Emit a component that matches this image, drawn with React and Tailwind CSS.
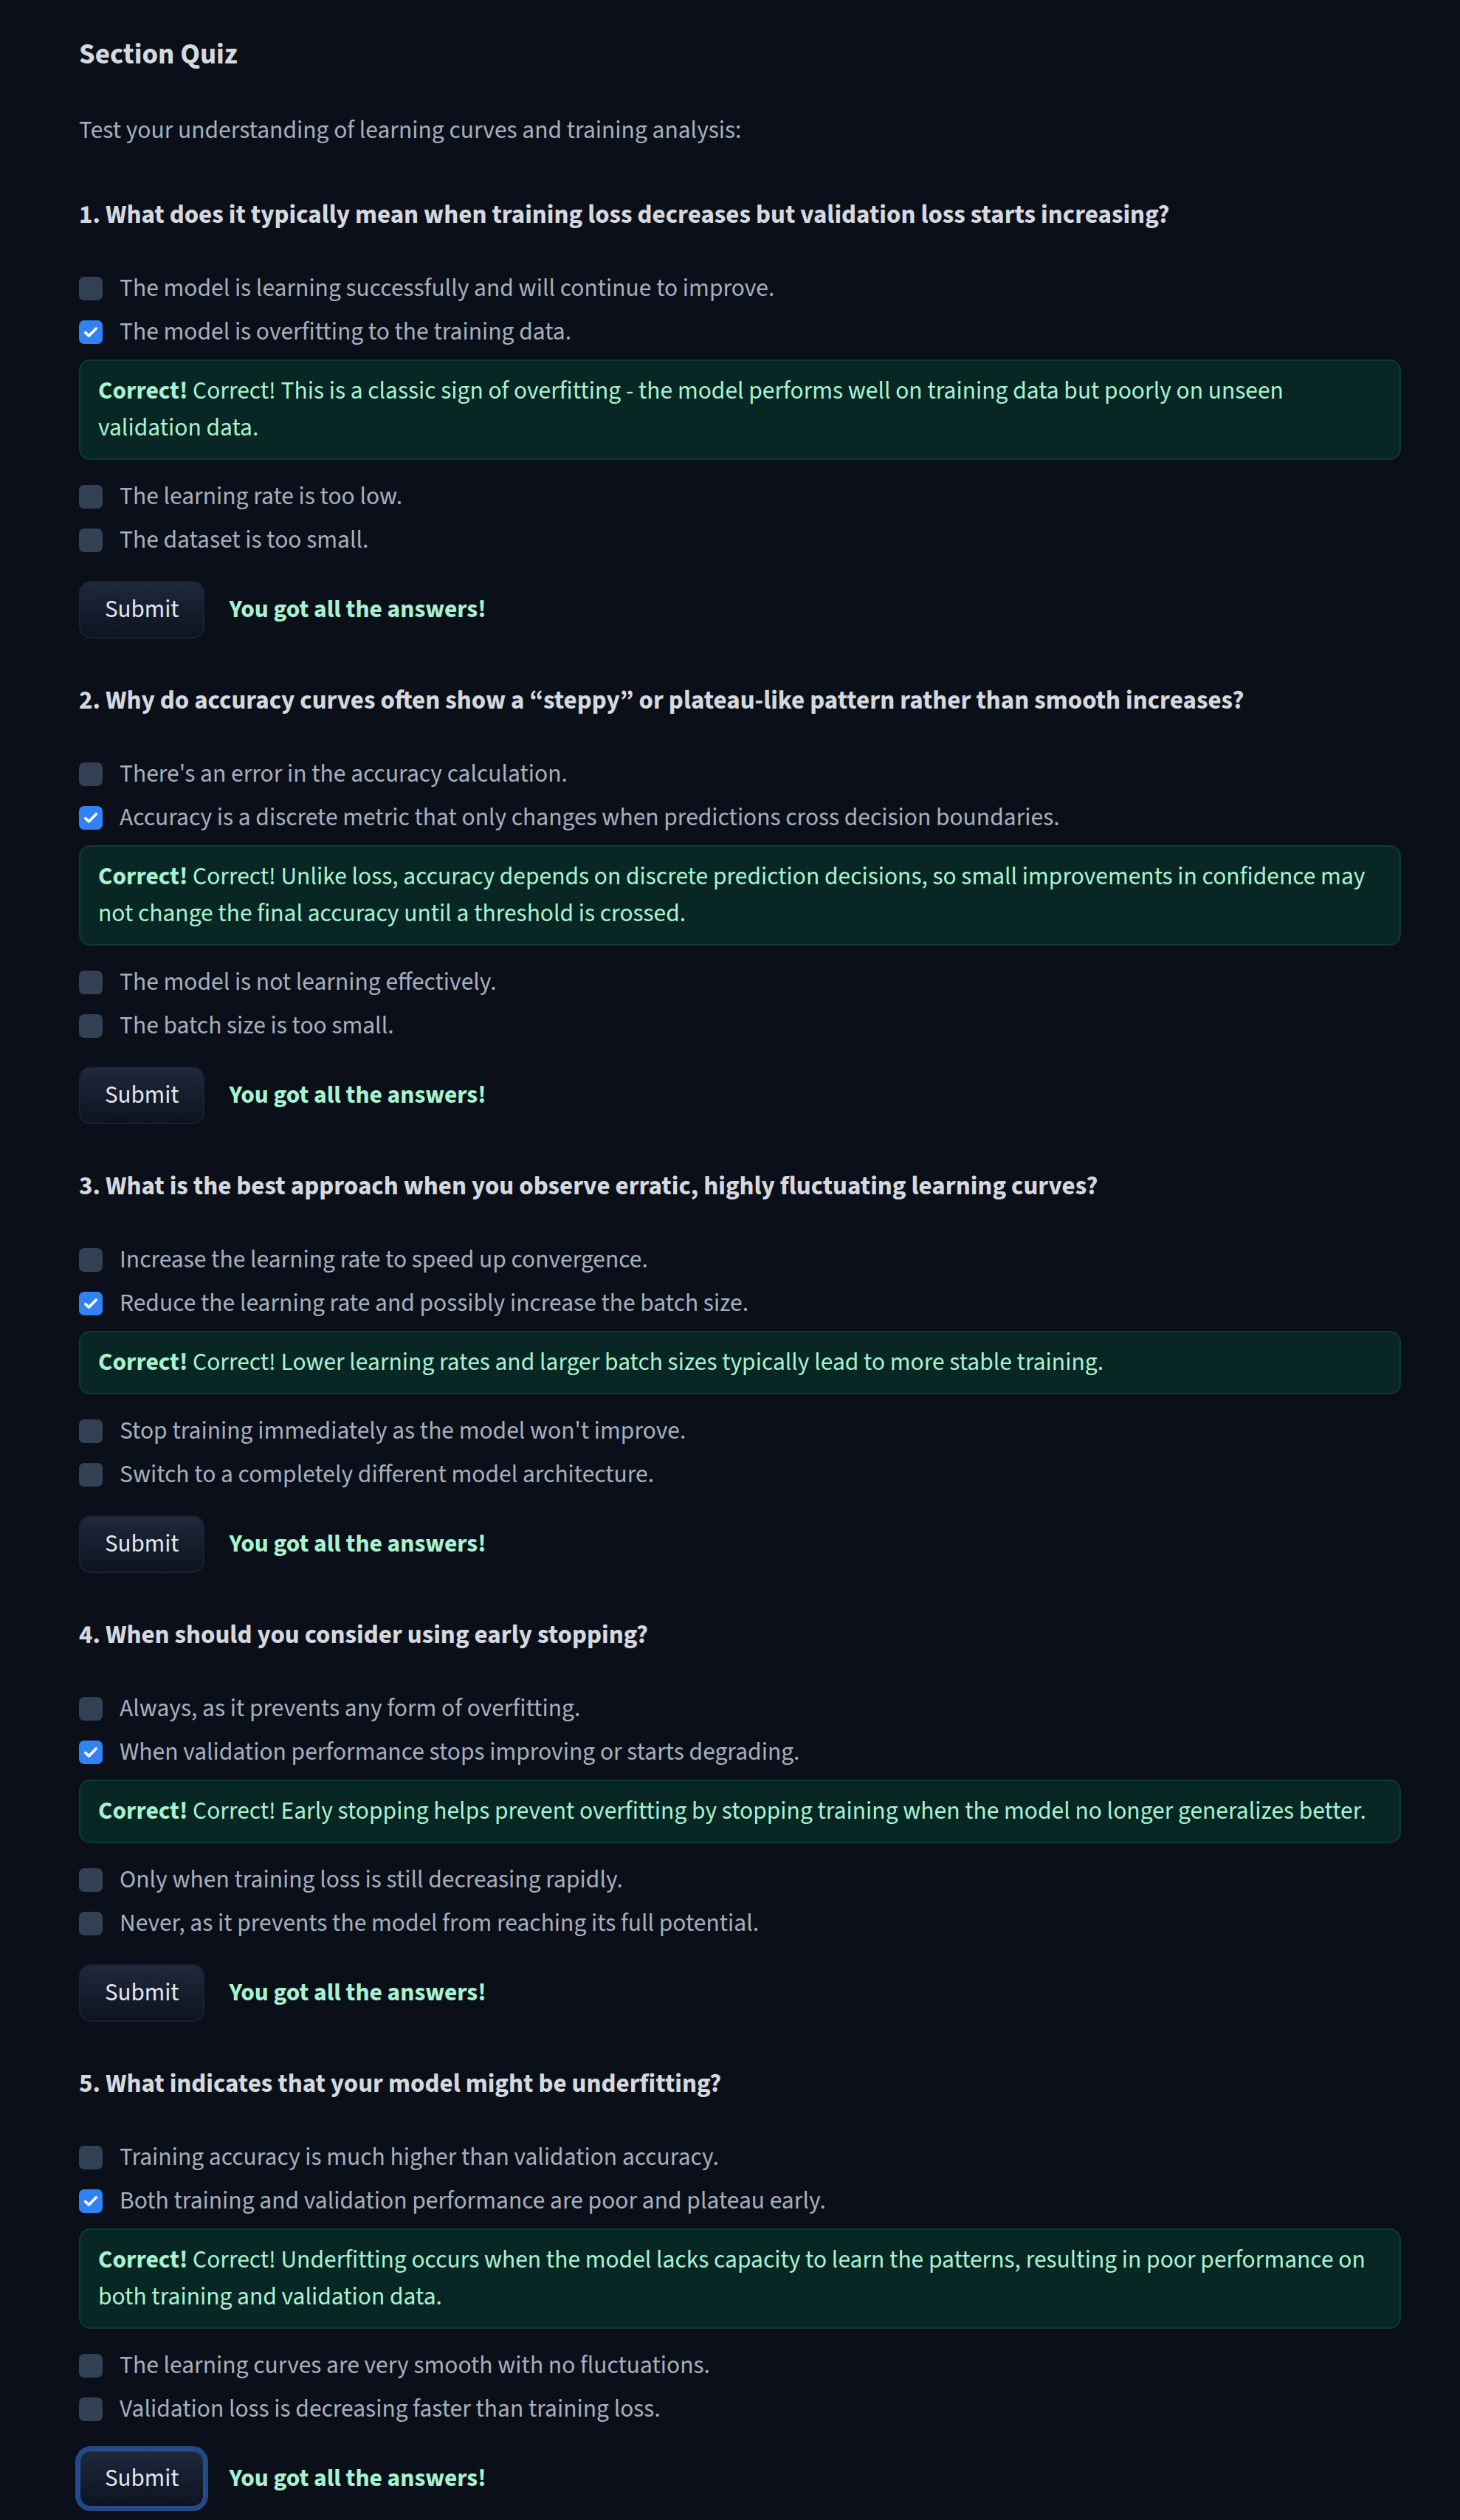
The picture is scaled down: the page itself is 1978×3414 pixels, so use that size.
import React from "react";

const questions = [
  {
    q: "1. What does it typically mean when training loss decreases but validation loss starts increasing?",
    options: [
      "The model is learning successfully and will continue to improve.",
      "The model is overfitting to the training data.",
      "The learning rate is too low.",
      "The dataset is too small.",
    ],
    feedback:
      "Correct! This is a classic sign of overfitting - the model performs well on training data but poorly on unseen validation data.",
  },
  {
    q: "2. Why do accuracy curves often show a \u201csteppy\u201d or plateau-like pattern rather than smooth increases?",
    options: [
      "There's an error in the accuracy calculation.",
      "Accuracy is a discrete metric that only changes when predictions cross decision boundaries.",
      "The model is not learning effectively.",
      "The batch size is too small.",
    ],
    feedback:
      "Correct! Unlike loss, accuracy depends on discrete prediction decisions, so small improvements in confidence may not change the final accuracy until a threshold is crossed.",
  },
  {
    q: "3. What is the best approach when you observe erratic, highly fluctuating learning curves?",
    options: [
      "Increase the learning rate to speed up convergence.",
      "Reduce the learning rate and possibly increase the batch size.",
      "Stop training immediately as the model won't improve.",
      "Switch to a completely different model architecture.",
    ],
    feedback:
      "Correct! Lower learning rates and larger batch sizes typically lead to more stable training.",
  },
  {
    q: "4. When should you consider using early stopping?",
    options: [
      "Always, as it prevents any form of overfitting.",
      "When validation performance stops improving or starts degrading.",
      "Only when training loss is still decreasing rapidly.",
      "Never, as it prevents the model from reaching its full potential.",
    ],
    feedback:
      "Correct! Early stopping helps prevent overfitting by stopping training when the model no longer generalizes better.",
  },
  {
    q: "5. What indicates that your model might be underfitting?",
    options: [
      "Training accuracy is much higher than validation accuracy.",
      "Both training and validation performance are poor and plateau early.",
      "The learning curves are very smooth with no fluctuations.",
      "Validation loss is decreasing faster than training loss.",
    ],
    feedback:
      "Correct! Underfitting occurs when the model lacks capacity to learn the patterns, resulting in poor performance on both training and validation data.",
  },
];

function Checkbox({ checked }) {
  if (checked) {
    return (
      <span className="flex h-[32px] w-[32px] shrink-0 items-center justify-center rounded-[7px] bg-[#3182f6]">
        <svg width="24" height="24" viewBox="0 0 24 24" fill="none">
          <path d="M4.8 12.6l4.6 4.4L19.2 7" stroke="white" strokeWidth="3.6" strokeLinecap="round" strokeLinejoin="round" />
        </svg>
      </span>
    );
  }
  return <span className="block h-[32px] w-[32px] shrink-0 rounded-[7px] bg-[#334155]" />;
}

function Option({ text, checked }) {
  return (
    <div className="flex h-[59px] items-center gap-[23px]">
      <Checkbox checked={checked} />
      <span className="text-[33.5px] leading-[48px] text-[#a6afbd]">{text}</span>
    </div>
  );
}

function Question({ data, last }) {
  return (
    <section className="flex flex-col">
      <h3 className="text-[35px] font-bold leading-[48px] text-[#d5d9df]">{data.q}</h3>
      <div className="mt-[46px] flex flex-col">
        <Option text={data.options[0]} />
        <Option text={data.options[1]} checked />
      </div>
      <p className="mt-[8px] rounded-[15px] border-2 border-[#0c3a33] bg-[#082624] px-[24px] py-[16px] text-[33.5px] leading-[50px] text-[#a7f3d0]">
        <span className="font-bold">Correct!</span>
        {" " + data.feedback}
      </p>
      <div className="mt-[20px] flex flex-col">
        <Option text={data.options[2]} />
        <Option text={data.options[3]} />
      </div>
      <div className="mt-[26px] flex items-center gap-[33px]">
        <button
          className={
            last
              ? "h-[78px] rounded-[16px] border-2 border-[#2a4f8f] bg-gradient-to-b from-[#1e293b] to-[#0d1322] px-[33px] text-[33px] text-[#e5e7eb] ring-[5px] ring-[#24498b]"
              : "h-[78px] rounded-[16px] border-2 border-[#1a2131] bg-gradient-to-b from-[#1e293b] to-[#0d1322] px-[33px] text-[33px] text-[#e5e7eb]"
          }
        >
          Submit
        </button>
        <span className="text-[33.5px] font-bold text-[#a7f3d0]">You got all the answers!</span>
      </div>
    </section>
  );
}

export default function App() {
  return (
    <div className="min-h-screen bg-[#0b0f19] pl-[107px] pr-[80px] pt-[50px] pb-[20px] font-['Source_Sans_3',_'Source_Sans_Pro',_sans-serif]">
      <h2 className="text-[39px] font-bold leading-[48px] text-[#d5d9df]">Section Quiz</h2>
      <p className="mt-[55px] text-[33.5px] leading-[48px] text-[#a6afbd]">
        Test your understanding of learning curves and training analysis:
      </p>
      <div className="mt-[66px] flex flex-col gap-[60px]">
        {questions.map((q, i) => (
          <Question key={i} data={q} last={i === questions.length - 1} />
        ))}
      </div>
    </div>
  );
}
